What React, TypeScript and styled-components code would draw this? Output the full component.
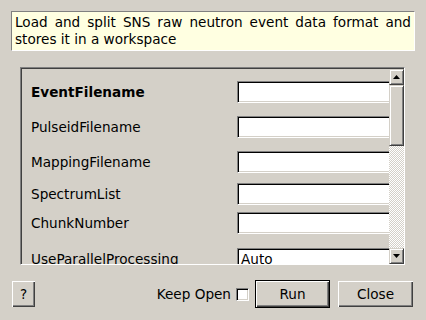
import React from "react";
import styled, { createGlobalStyle } from "styled-components";

const Global = createGlobalStyle`
  html, body { margin: 0; padding: 0; background: #d4d0c8; }
  body { width: 426px; height: 320px; overflow: hidden; font-family: "DejaVu Sans", "Liberation Sans", sans-serif; font-size: 13.6px; color: #000; }
`;

const Dialog = styled.div`
  width: 426px;
  height: 320px;
  display: flex;
  flex-direction: column;
  background: #d4d0c8;
  box-sizing: border-box;
`;

const Description = styled.div`
  margin: 11px 11px 0 11px;
  height: 40px;
  box-sizing: border-box;
  background: #ffffe1;
  border-top: 1px solid #808080;
  border-left: 1px solid #808080;
  border-right: 1px solid #ffffff;
  border-bottom: 1px solid #ffffff;
  padding: 2px 3px 0 3px;
  line-height: 17px;
  text-align: justify;
`;

const Frame = styled.div`
  margin: 16px 21px 0 20px;
  height: 198px;
  box-sizing: border-box;
  border-top: 1px solid #808080;
  border-left: 1px solid #808080;
  border-right: 1px solid #ffffff;
  border-bottom: 1px solid #ffffff;
  display: flex;
`;

const FrameInner = styled.div`
  flex: 1;
  display: flex;
  border-top: 1px solid #404040;
  border-left: 1px solid #404040;
  min-width: 0;
`;

const Content = styled.div`
  flex: 1;
  overflow: hidden;
  padding: 12px 0 0 9px;
  min-width: 0;
`;

const Row = styled.div<{ $top: number }>`
  display: grid;
  grid-template-columns: 206px 170px;
  align-items: center;
  height: 22px;
  margin-top: ${(p) => p.$top}px;
`;

const Label = styled.div<{ $bold?: boolean }>`
  font-weight: ${(p) => (p.$bold ? "bold" : "normal")};
  white-space: nowrap;
`;

const Field = styled.div`
  height: 22px;
  box-sizing: border-box;
  background: #fff;
  border-top: 1px solid #808080;
  border-left: 1px solid #808080;
  border-right: 1px solid #fff;
  border-bottom: 1px solid #fff;
  box-shadow: inset 1px 1px 0 #000, inset -1px -1px 0 #d4d0c8;
  padding: 2px 0 0 3px;
  line-height: 17px;
`;

const Scrollbar = styled.div`
  width: 15px;
  display: flex;
  flex-direction: column;
  flex: none;
`;

const ScrollButton = styled.div`
  height: 16px;
  box-sizing: border-box;
  background: #d4d0c8;
  border-top: 1px solid #d4d0c8;
  border-left: 1px solid #d4d0c8;
  border-right: 1px solid #404040;
  border-bottom: 1px solid #404040;
  box-shadow: inset 1px 1px 0 #fff, inset -1px -1px 0 #808080;
  display: flex;
  align-items: center;
  justify-content: center;
  flex: none;
`;

const Thumb = styled(ScrollButton)<{ $h: number }>`
  height: ${(p) => p.$h}px;
`;

const Track = styled.div`
  flex: 1;
  background: repeating-conic-gradient(#ffffff 0 25%, #d4d0c8 0 50%) 0 0 / 2px 2px;
`;

const Footer = styled.div`
  display: flex;
  align-items: center;
  margin-top: 15px;
  padding: 0 13px 0 12px;
  height: 28px;
`;

const Button = styled.button<{ $w: number; $default?: boolean }>`
  width: ${(p) => p.$w}px;
  height: ${(p) => (p.$default ? 28 : 26)}px;
  box-sizing: border-box;
  font: inherit;
  color: #000;
  background: #d4d0c8;
  padding: 0;
  border: ${(p) => (p.$default ? "1px solid #000" : "none")};
  box-shadow: inset 1px 1px 0 #fff, inset -1px -1px 0 #404040, inset -2px -2px 0 #808080;
  display: flex;
  align-items: center;
  justify-content: center;
`;

const Spacer = styled.div<{ $w?: number }>`
  flex: ${(p) => (p.$w ? "none" : "1")};
  width: ${(p) => (p.$w ? `${p.$w}px` : "auto")};
`;

const KeepOpen = styled.span`
  margin-right: 5px;
`;

const Check = styled.div`
  width: 13px;
  height: 13px;
  box-sizing: border-box;
  background: #fff;
  border-top: 1px solid #808080;
  border-left: 1px solid #808080;
  border-right: 1px solid #fff;
  border-bottom: 1px solid #fff;
  box-shadow: inset 1px 1px 0 #000, inset -1px -1px 0 #d4d0c8;
  margin-right: 6px;
`;

const Arrow = ({ down }: { down?: boolean }) => (
  <svg width="7" height="4" viewBox="0 0 7 4">
    {down ? <polygon points="0,0 7,0 3.5,4" fill="#000" /> : <polygon points="0,4 7,4 3.5,0" fill="#000" />}
  </svg>
);

const rows = [
  { label: "EventFilename", bold: true, top: 0 },
  { label: "PulseidFilename", top: 13 },
  { label: "MappingFilename", top: 13 },
  { label: "SpectrumList", top: 10 },
  { label: "ChunkNumber", top: 7 },
  { label: "UseParallelProcessing", top: 14, value: "Auto" },
];

export default function App() {
  return (
    <Dialog>
      <Global />
      <Description>Load and split SNS raw neutron event data format and stores it in a workspace</Description>
      <Frame>
        <FrameInner>
          <Content>
            {rows.map((r) => (
              <Row key={r.label} $top={r.top}>
                <Label $bold={r.bold}>{r.label}</Label>
                <Field>{r.value ?? ""}</Field>
              </Row>
            ))}
          </Content>
          <Scrollbar>
            <ScrollButton>
              <Arrow />
            </ScrollButton>
            <Thumb $h={61} />
            <Track />
            <ScrollButton>
              <Arrow down />
            </ScrollButton>
          </Scrollbar>
        </FrameInner>
      </Frame>
      <Footer>
        <Button $w={23}>?</Button>
        <Spacer />
        <KeepOpen>Keep Open</KeepOpen>
        <Check />
        <Button $w={75} $default>
          Run
        </Button>
        <Spacer $w={8} />
        <Button $w={75}>Close</Button>
      </Footer>
    </Dialog>
  );
}
